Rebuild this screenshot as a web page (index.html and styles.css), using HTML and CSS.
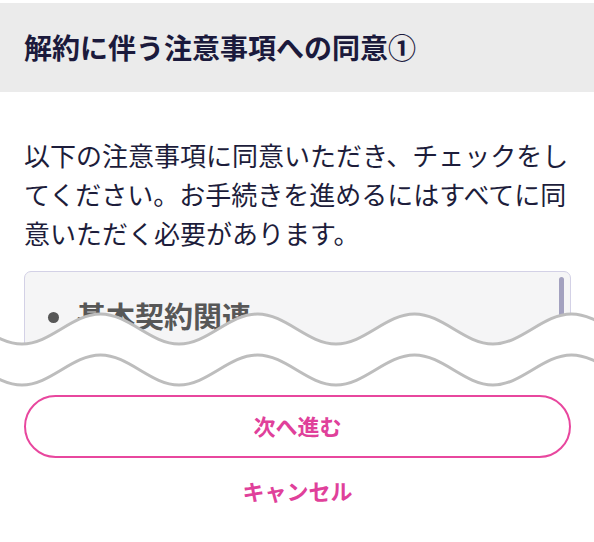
FILE: index.html
```html
<!DOCTYPE html>
<html lang="ja">
<head>
<meta charset="utf-8">
<link rel="stylesheet" href="styles.css">
</head>
<body>
<div class="page">
  <header class="head">
    <h1 class="title">解約に伴う注意事項への同意①</h1>
  </header>
  <main class="content">
    <p class="lead">以下の注意事項に同意いただき、チェックをしてください。お手続きを進めるにはすべてに同意いただく必要があります。</p>
    <div class="terms">
      <ul class="terms-list">
        <li>基本契約関連</li>
      </ul>
      <div class="scrollbar"></div>
    </div>
    <div class="actions">
      <button class="btn-next" type="button">次へ進む</button>
      <button class="btn-cancel" type="button">キャンセル</button>
    </div>
  </main>
  <svg class="cut" width="594" height="89" viewBox="0 0 594 89" xmlns="http://www.w3.org/2000/svg">
    <path d="M-135 44 C-106.4 44 -85.1 14 -56.5 14 C-27.9 14 -6.6 44 22 44 C50.6 44 71.9 14 100.5 14 C129.1 14 150.4 44 179 44 C207.6 44 228.9 14 257.5 14 C286.1 14 307.4 44 336 44 C364.6 44 385.9 14 414.5 14 C443.1 14 464.4 44 493 44 C521.6 44 542.9 14 571.5 14 C600.1 14 621.4 44 650 44 L650 89 L-135 89 Z" fill="#ffffff"/>
    <path d="M-135 44 C-106.4 44 -85.1 14 -56.5 14 C-27.9 14 -6.6 44 22 44 C50.6 44 71.9 14 100.5 14 C129.1 14 150.4 44 179 44 C207.6 44 228.9 14 257.5 14 C286.1 14 307.4 44 336 44 C364.6 44 385.9 14 414.5 14 C443.1 14 464.4 44 493 44 C521.6 44 542.9 14 571.5 14 C600.1 14 621.4 44 650 44" fill="none" stroke="#bdbdbd" stroke-width="3"/>
    <path d="M-135 85 C-106.4 85 -85.1 55 -56.5 55 C-27.9 55 -6.6 85 22 85 C50.6 85 71.9 55 100.5 55 C129.1 55 150.4 85 179 85 C207.6 85 228.9 55 257.5 55 C286.1 55 307.4 85 336 85 C364.6 85 385.9 55 414.5 55 C443.1 55 464.4 85 493 85 C521.6 85 542.9 55 571.5 55 C600.1 55 621.4 85 650 85" fill="none" stroke="#bdbdbd" stroke-width="3"/>
  </svg>
</div>
</body>
</html>
```

FILE: styles.css
```css
* { box-sizing: border-box; }
html, body { margin: 0; padding: 0; background: #ffffff; }
body {
  font-family: "Noto Sans CJK JP", "Noto Sans", sans-serif;
  color: #1d1d3b;
}
.page {
  position: relative;
  width: 594px;
  height: 542px;
  overflow: hidden;
  padding-top: 3px;
}
.head {
  background: #ebebeb;
  height: 89px;
  padding: 0 24px;
  display: flex;
  align-items: center;
}
.title {
  margin: 0;
  font-size: 28px;
  font-weight: 700;
  color: #1b1a3c;
  line-height: 1.2;
}
.content {
  padding: 0 23px 0 24px;
}
.lead {
  margin: 43px 0 0;
  font-size: 26px;
  line-height: 39px;
  color: #1d1d3b;
}
.terms {
  position: relative;
  margin-top: 19px;
  height: 105px;
  background: #f5f5f6;
  border: 1.5px solid #d3d1e6;
  border-radius: 7px;
  overflow: hidden;
}
.terms-list {
  margin: 0;
  padding: 23px 0 0 52px;
  font-size: 29px;
  font-weight: 700;
  color: #575757;
  line-height: 1.4;
}
.scrollbar {
  position: absolute;
  top: 5px;
  right: 6px;
  width: 5px;
  height: 60px;
  border-radius: 3px;
  background: #a3a1bf;
}
.actions {
  margin-top: 19px;
  display: flex;
  flex-direction: column;
  align-items: stretch;
}
.btn-next {
  height: 63px;
  border: 2px solid #e8479e;
  border-radius: 32px;
  background: #ffffff;
  color: #e0409a;
  font-family: inherit;
  font-size: 22px;
  font-weight: 700;
  padding: 0 0 3px;
}
.btn-cancel {
  margin-top: 13px;
  height: 40px;
  border: 0;
  background: transparent;
  color: #e0409a;
  font-family: inherit;
  font-size: 22px;
  font-weight: 700;
  padding: 0 0 3px;
}
.cut {
  position: absolute;
  left: 0;
  top: 300px;
  display: block;
}
```
